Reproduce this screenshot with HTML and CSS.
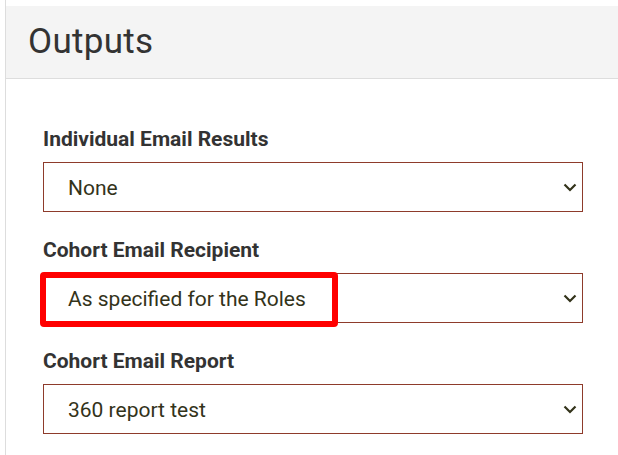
FILE: index.html
```html
<!DOCTYPE html>
<html lang="en">
<head>
<meta charset="utf-8">
<title>Outputs</title>
<link rel="stylesheet" href="styles.css">
</head>
<body>
<section class="panel">
  <header class="panel-head">
    <h2 class="panel-title">Outputs</h2>
  </header>
  <div class="panel-body">
    <div class="field">
      <label class="field-label">Individual Email Results</label>
      <div class="select">
        <span class="select-value">None</span>
        <svg class="chevron" width="14" height="9" viewBox="0 0 14 9"><path d="M1.5 1.5 L7 7 L12.5 1.5" fill="none" stroke="#33331a" stroke-width="2.2"/></svg>
      </div>
    </div>
    <div class="field">
      <label class="field-label">Cohort Email Recipient</label>
      <div class="select">
        <span class="select-value">As specified for the Roles</span>
        <svg class="chevron" width="14" height="9" viewBox="0 0 14 9"><path d="M1.5 1.5 L7 7 L12.5 1.5" fill="none" stroke="#33331a" stroke-width="2.2"/></svg>
        <span class="highlight"></span>
      </div>
    </div>
    <div class="field">
      <label class="field-label">Cohort Email Report</label>
      <div class="select">
        <span class="select-value">360 report test</span>
        <svg class="chevron" width="14" height="9" viewBox="0 0 14 9"><path d="M1.5 1.5 L7 7 L12.5 1.5" fill="none" stroke="#33331a" stroke-width="2.2"/></svg>
      </div>
    </div>
  </div>
</section>
</body>
</html>
```
FILE: styles.css
```css
html, body {
  margin: 0;
  padding: 0;
  background: #ffffff;
}
body {
  font-family: Roboto, "Liberation Sans", Arial, sans-serif;
  color: #333333;
}
.panel {
  margin-left: 5px;
  border-left: 1px solid #dddddd;
  padding-top: 6px;
  min-height: 449px;
  width: 640px;
}
.panel-head {
  background: #f4f4f4;
  border-bottom: 1px solid #dddddd;
  padding: 17px 0 17px 22px;
}
.panel-title {
  margin: 0;
  font-size: 35px;
  line-height: 38px;
  font-weight: 400;
  letter-spacing: 0.3px;
  color: #333333;
}
.panel-body {
  padding: 48px 0 0 37px;
  display: flex;
  flex-direction: column;
  gap: 26px;
}
.field {
  display: flex;
  flex-direction: column;
  gap: 11px;
}
.field-label {
  font-size: 21px;
  line-height: 24px;
  font-weight: 700;
  color: #333333;
}
.select {
  position: relative;
  box-sizing: border-box;
  width: 540px;
  height: 50px;
  border: 1px solid #8e3b2b;
  background: #ffffff;
  display: flex;
  align-items: center;
  padding: 1px 5px 0 24px;
}
.select-value {
  flex: 1;
  font-size: 21px;
  color: #33331a;
}
.chevron {
  display: block;
}
.highlight {
  position: absolute;
  left: -4px;
  top: -2px;
  width: 298px;
  height: 55px;
  box-sizing: border-box;
  border: 6px solid #ff0000;
  border-radius: 4px;
}
```
